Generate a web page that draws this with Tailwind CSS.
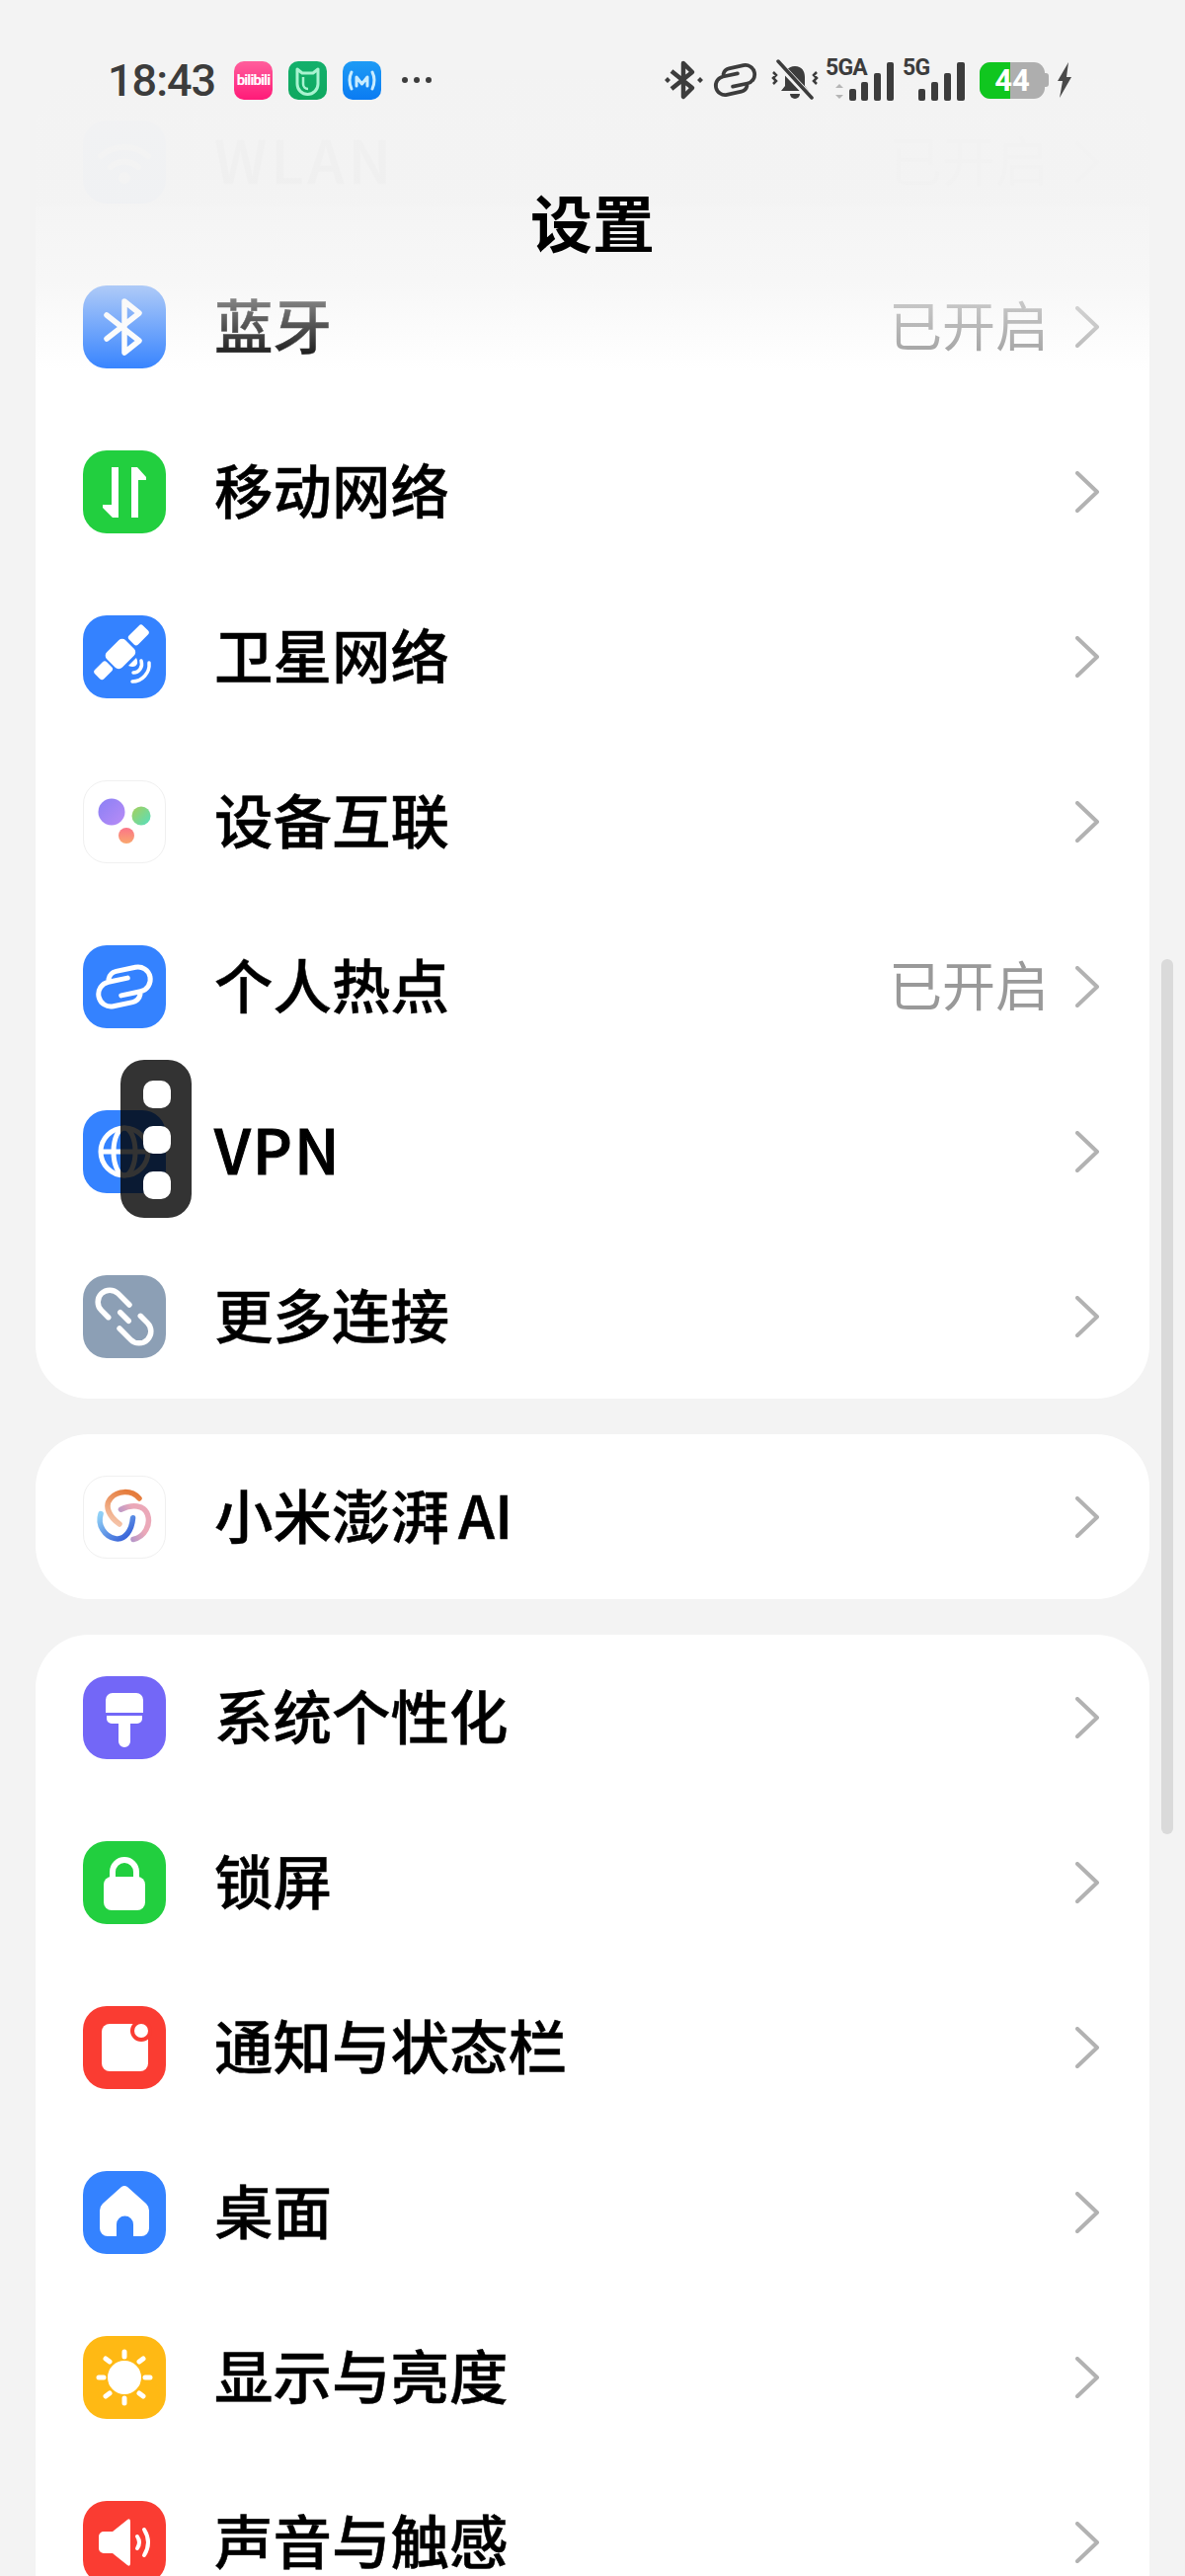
<!DOCTYPE html>
<html lang="zh-CN">
<head>
  <meta charset="UTF-8" />
  <title>设置</title>
  <script src="https://cdn.jsdelivr.net/npm/@tailwindcss/browser@4"></script>
</head>
<body class="bg-[#f3f3f3] font-['Noto_Sans_CJK_SC',sans-serif]">
  <svg class="hidden">
    <symbol id="chevron" viewBox="0 0 24 42"><path d="M2 2l20 19L2 40" fill="none" stroke="#b2b2b2" stroke-width="4" stroke-linecap="round" stroke-linejoin="round"/></symbol>
    <symbol id="chain" viewBox="0 0 84 84"><g transform="rotate(-12 42 42)" fill="none" stroke="currentColor" stroke-width="5" stroke-linecap="round"><path d="M47 34H27a12.500 12.500 0 0 0 0 25h20a10 10 0 0 0 9-6"/><path d="M37 50h20a12.500 12.500 0 0 0 0-25H37a10 10 0 0 0-9 6"/></g></symbol>
  </svg>

  <div class="relative w-[1200px] h-[2608px] overflow-hidden">
    <!-- Settings list -->
    <main class="pt-[80px] px-[36px] flex flex-col gap-[36px]">
      <section class="bg-white rounded-[54px]">
        <!-- WLAN -->
        <div class="h-[167px] flex items-center pl-[48px] pr-[51px]">
          <div class="w-[84px] h-[84px] rounded-[24px] bg-[#3482ff] flex items-center justify-center">
            <svg class="w-[84px] h-[84px]" viewBox="0 0 84 84" fill="none" stroke="#fff" stroke-width="6" stroke-linecap="round"><path d="M18 36c14-12 34-12 48 0M28 47c8-7 20-7 28 0"/><circle cx="42" cy="58" r="3" fill="#fff"/></svg>
          </div>
          <span class="ml-[49px] mb-[6px] text-[59.5px] font-medium tracking-[4px] text-black [-webkit-text-stroke:0.5px_black]">WLAN</span>
          <span class="ml-auto mb-[6px] text-[54px] text-[#999]">已开启</span>
          <svg class="ml-[27px] w-[24px] h-[42px]"><use href="#chevron"/></svg>
        </div>
        <!-- 蓝牙 -->
        <div class="h-[167px] flex items-center pl-[48px] pr-[51px]">
          <div class="w-[84px] h-[84px] rounded-[24px] bg-[#3482ff]">
            <svg class="w-[84px] h-[84px]" viewBox="0 0 84 84" fill="none" stroke="#fff" stroke-width="5.500" stroke-linecap="round" stroke-linejoin="round"><path d="M24 30l33 26-15 12V16l15 12-33 26"/></svg>
          </div>
          <span class="ml-[49px] mb-[6px] text-[59.5px] font-medium text-black [-webkit-text-stroke:0.5px_black]">蓝牙</span>
          <span class="ml-auto mb-[6px] text-[54px] text-[#999]">已开启</span>
          <svg class="ml-[27px] w-[24px] h-[42px]"><use href="#chevron"/></svg>
        </div>
        <!-- 移动网络 -->
        <div class="h-[167px] flex items-center pl-[48px] pr-[51px]">
          <div class="w-[84px] h-[84px] rounded-[24px] bg-[#22cf3f]">
            <svg class="w-[84px] h-[84px]" viewBox="0 0 84 84" fill="#fff"><path d="M29 17h7v51h-6L20 58v-3h9zM49 17h6l9 10v3h-8v38h-7z"/></svg>
          </div>
          <span class="ml-[49px] mb-[6px] text-[59.5px] font-medium text-black [-webkit-text-stroke:0.5px_black]">移动网络</span>
          <svg class="ml-auto w-[24px] h-[42px]"><use href="#chevron"/></svg>
        </div>
        <!-- 卫星网络 -->
        <div class="h-[167px] flex items-center pl-[48px] pr-[51px]">
          <div class="w-[84px] h-[84px] rounded-[24px] bg-[#3482ff]">
            <svg class="w-[84px] h-[84px]" viewBox="0 0 84 84" fill="#fff">
              <g transform="rotate(-45 39 38)"><rect x="5" y="31" width="17" height="13" rx="3"/><rect x="24" y="27" width="27" height="22" rx="5"/><rect x="54" y="31" width="20" height="13" rx="3"/></g>
              <path d="M46 51l8-8c3 6 0 11-8 8z"/>
              <path d="M59 46c2 6-2 12-8 12M67 48c1 10-7 19-17 19" fill="none" stroke="#fff" stroke-width="3.500" stroke-linecap="round"/>
            </svg>
          </div>
          <span class="ml-[49px] mb-[6px] text-[59.5px] font-medium text-black [-webkit-text-stroke:0.5px_black]">卫星网络</span>
          <svg class="ml-auto w-[24px] h-[42px]"><use href="#chevron"/></svg>
        </div>
        <!-- 设备互联 -->
        <div class="h-[167px] flex items-center pl-[48px] pr-[51px]">
          <div class="w-[84px] h-[84px] rounded-[24px] bg-white border border-[#f0f0f0]">
            <svg class="w-[82px] h-[82px]" viewBox="1 1 82 82">
              <defs>
                <linearGradient id="dot1" x1="0" y1="0" x2="1" y2="1"><stop offset="0" stop-color="#8a80f5"/><stop offset="1" stop-color="#b98cf6"/></linearGradient>
                <linearGradient id="dot2" x1="0" y1="0" x2="1" y2="1"><stop offset="0" stop-color="#a8cf5a"/><stop offset="1" stop-color="#55dfc0"/></linearGradient>
                <linearGradient id="dot3" x1="0" y1="0" x2="0" y2="1"><stop offset="0" stop-color="#fb7488"/><stop offset="1" stop-color="#f9a76e"/></linearGradient>
              </defs>
              <circle cx="29" cy="32" r="13.500" fill="url(#dot1)"/><circle cx="59" cy="36" r="9.500" fill="url(#dot2)"/><circle cx="44" cy="56" r="8" fill="url(#dot3)"/>
            </svg>
          </div>
          <span class="ml-[49px] mb-[6px] text-[59.5px] font-medium text-black [-webkit-text-stroke:0.5px_black]">设备互联</span>
          <svg class="ml-auto w-[24px] h-[42px]"><use href="#chevron"/></svg>
        </div>
        <!-- 个人热点 -->
        <div class="h-[167px] flex items-center pl-[48px] pr-[51px]">
          <div class="w-[84px] h-[84px] rounded-[24px] bg-[#3482ff] text-white">
            <svg class="w-[84px] h-[84px]"><use href="#chain"/></svg>
          </div>
          <span class="ml-[49px] mb-[6px] text-[59.5px] font-medium text-black [-webkit-text-stroke:0.5px_black]">个人热点</span>
          <span class="ml-auto mb-[6px] text-[54px] text-[#999]">已开启</span>
          <svg class="ml-[27px] w-[24px] h-[42px]"><use href="#chevron"/></svg>
        </div>
        <!-- VPN -->
        <div class="h-[167px] flex items-center pl-[48px] pr-[51px]">
          <div class="w-[84px] h-[84px] rounded-[24px] bg-[#3482ff]">
            <svg class="w-[84px] h-[84px]" viewBox="0 0 84 84" fill="none" stroke="#fff" stroke-width="5"><circle cx="42" cy="42" r="24"/><ellipse cx="42" cy="42" rx="11" ry="24"/><path d="M18 42h48"/></svg>
          </div>
          <span class="ml-[49px] mb-[6px] text-[62px] font-medium tracking-[2px] text-black [-webkit-text-stroke:1px_black]">VPN</span>
          <svg class="ml-auto w-[24px] h-[42px]"><use href="#chevron"/></svg>
        </div>
        <!-- 更多连接 -->
        <div class="h-[167px] flex items-center pl-[48px] pr-[51px]">
          <div class="w-[84px] h-[84px] rounded-[24px] bg-[#8c9fb5]">
            <svg class="w-[84px] h-[84px]" viewBox="0 0 84 84" fill="none" stroke="#fff" stroke-width="5.500" stroke-linecap="round"><g transform="rotate(45 42 42)"><path d="M37 30H21a12 12 0 0 0 0 24h10"/><path d="M47 54h16a12 12 0 0 0 0-24H53"/><path d="M36 42h12"/></g></svg>
          </div>
          <span class="ml-[49px] mb-[6px] text-[59.5px] font-medium text-black [-webkit-text-stroke:0.5px_black]">更多连接</span>
          <svg class="ml-auto w-[24px] h-[42px]"><use href="#chevron"/></svg>
        </div>
      </section>

      <section class="bg-white rounded-[54px]">
        <!-- 小米澎湃AI -->
        <div class="h-[167px] flex items-center pl-[48px] pr-[51px]">
          <div class="w-[84px] h-[84px] rounded-[24px] bg-white border border-[#f0f0f0]">
            <svg class="w-[82px] h-[82px]" viewBox="1 1 82 82" fill="none" stroke-width="5.500" stroke-linecap="round">
              <defs>
                <linearGradient id="arm1" gradientUnits="userSpaceOnUse" x1="36" y1="50" x2="50" y2="18"><stop offset="0" stop-color="#f5c3a8"/><stop offset="1" stop-color="#e57c3c"/></linearGradient>
                <linearGradient id="arm2" gradientUnits="userSpaceOnUse" x1="36" y1="30" x2="66" y2="50"><stop offset="0" stop-color="#eba8b8"/><stop offset="1" stop-color="#6f7fe0"/></linearGradient>
                <linearGradient id="arm3" gradientUnits="userSpaceOnUse" x1="60" y1="44" x2="22" y2="50"><stop offset="0" stop-color="#8fd0f6"/><stop offset="1" stop-color="#3159d6"/></linearGradient>
              </defs>
              <path d="M37 49C27 42 21 31 28 23C35 15 49 14 57 23" stroke="url(#arm1)"/>
              <path d="M37 49C27 42 21 31 28 23C35 15 49 14 57 23" transform="rotate(120 42 42)" stroke="url(#arm2)"/>
              <path d="M37 49C27 42 21 31 28 23C35 15 49 14 57 23" transform="rotate(240 42 42)" stroke="url(#arm3)"/>
            </svg>
          </div>
          <span class="ml-[49px] mb-[6px] text-[59.5px] font-medium text-black [-webkit-text-stroke:0.5px_black]">小米澎湃<span class="ml-[9px]">AI</span></span>
          <svg class="ml-auto w-[24px] h-[42px]"><use href="#chevron"/></svg>
        </div>
      </section>

      <section class="bg-white rounded-[54px]">
        <!-- 系统个性化 -->
        <div class="h-[167px] flex items-center pl-[48px] pr-[51px]">
          <div class="w-[84px] h-[84px] rounded-[24px] bg-[#7367f7]">
            <svg class="w-[84px] h-[84px]" viewBox="0 0 84 84" fill="#fff"><path d="M30 17h24a7 7 0 0 1 7 7v13H23V24a7 7 0 0 1 7-7z"/><path d="M24 40h36v3a5 5 0 0 1-5 5h-7v18a6 6 0 0 1-12 0V48h-7a5 5 0 0 1-5-5z"/></svg>
          </div>
          <span class="ml-[49px] mb-[6px] text-[59.5px] font-medium text-black [-webkit-text-stroke:0.5px_black]">系统个性化</span>
          <svg class="ml-auto w-[24px] h-[42px]"><use href="#chevron"/></svg>
        </div>
        <!-- 锁屏 -->
        <div class="h-[167px] flex items-center pl-[48px] pr-[51px]">
          <div class="w-[84px] h-[84px] rounded-[24px] bg-[#22cf3f]">
            <svg class="w-[84px] h-[84px]" viewBox="0 0 84 84"><path d="M30 38v-7a12 12 0 0 1 24 0v7" fill="none" stroke="#fff" stroke-width="6"/><rect x="21" y="36" width="42" height="34" rx="8" fill="#fff"/></svg>
          </div>
          <span class="ml-[49px] mb-[6px] text-[59.5px] font-medium text-black [-webkit-text-stroke:0.5px_black]">锁屏</span>
          <svg class="ml-auto w-[24px] h-[42px]"><use href="#chevron"/></svg>
        </div>
        <!-- 通知与状态栏 -->
        <div class="h-[167px] flex items-center pl-[48px] pr-[51px]">
          <div class="w-[84px] h-[84px] rounded-[24px] bg-[#fa3c32]">
            <svg class="w-[84px] h-[84px]" viewBox="0 0 84 84" fill="#fff"><rect x="19" y="18" width="47" height="48" rx="8"/><circle cx="59" cy="25" r="11" fill="#fa3c32"/><circle cx="59" cy="25" r="7"/></svg>
          </div>
          <span class="ml-[49px] mb-[6px] text-[59.5px] font-medium text-black [-webkit-text-stroke:0.5px_black]">通知与状态栏</span>
          <svg class="ml-auto w-[24px] h-[42px]"><use href="#chevron"/></svg>
        </div>
        <!-- 桌面 -->
        <div class="h-[167px] flex items-center pl-[48px] pr-[51px]">
          <div class="w-[84px] h-[84px] rounded-[24px] bg-[#3482ff]">
            <svg class="w-[84px] h-[84px]" viewBox="0 0 84 84" fill="#fff"><path d="M39 16q3-2 6 0l19 17q3 3 3 7v18a8 8 0 0 1-8 8h-8V54a8.500 8.500 0 0 0-17 0v12h-9a8 8 0 0 1-8-8V40q0-4 3-7z"/></svg>
          </div>
          <span class="ml-[49px] mb-[6px] text-[59.5px] font-medium text-black [-webkit-text-stroke:0.5px_black]">桌面</span>
          <svg class="ml-auto w-[24px] h-[42px]"><use href="#chevron"/></svg>
        </div>
        <!-- 显示与亮度 -->
        <div class="h-[167px] flex items-center pl-[48px] pr-[51px]">
          <div class="w-[84px] h-[84px] rounded-[24px] bg-[#ffb914]">
            <svg class="w-[84px] h-[84px]" viewBox="0 0 84 84" fill="#fff" stroke="#fff" stroke-width="5" stroke-linecap="round"><circle cx="42" cy="42" r="14.500"/><path d="M42 16v5M42 63v5M16 42h5M63 42h5M23 23l4 3M61 23l-4 3M23 61l4-3M61 61l-4-3"/></svg>
          </div>
          <span class="ml-[49px] mb-[6px] text-[59.5px] font-medium text-black [-webkit-text-stroke:0.5px_black]">显示与亮度</span>
          <svg class="ml-auto w-[24px] h-[42px]"><use href="#chevron"/></svg>
        </div>
        <!-- 声音与触感 -->
        <div class="h-[167px] flex items-center pl-[48px] pr-[51px]">
          <div class="w-[84px] h-[84px] rounded-[24px] bg-[#fa3c32]">
            <svg class="w-[84px] h-[84px]" viewBox="0 0 84 84" fill="#fff"><path d="M21 31h9l15-12q3-2 3 2v42q0 4-3 2L30 53h-9a5 5 0 0 1-5-5V36a5 5 0 0 1 5-5z"/><path d="M55 36q4 6 0 12M62 29q8 13 0 26" fill="none" stroke="#fff" stroke-width="4" stroke-linecap="round"/></svg>
          </div>
          <span class="ml-[49px] mb-[6px] text-[59.5px] font-medium text-black [-webkit-text-stroke:0.5px_black]">声音与触感</span>
          <svg class="ml-auto w-[24px] h-[42px]"><use href="#chevron"/></svg>
        </div>
      </section>
    </main>

    <!-- Scrollbar -->
    <div class="absolute left-[1176px] top-[971px] w-[12px] h-[886px] rounded-full bg-[#dadada]"></div>

    <!-- Floating pill over the VPN row -->
    <div class="absolute left-[122px] top-[1073px] w-[72px] h-[160px] rounded-[24px] bg-black/80 flex flex-col items-center pl-[1px] pt-[21px] gap-[18px]">
      <div class="w-[28px] h-[28px] rounded-[10px] bg-white"></div>
      <div class="w-[28px] h-[28px] rounded-[10px] bg-white"></div>
      <div class="w-[28px] h-[28px] rounded-[10px] bg-white"></div>
    </div>

    <!-- Header over the list, fades out the row beneath it -->
    <header class="absolute top-0 inset-x-0 h-[376px] bg-[linear-gradient(to_bottom,#f3f3f3_0,rgba(243,243,243,0.985)_205px,rgba(243,243,243,0.88)_212px,rgba(243,243,243,0.65)_288px,rgba(243,243,243,0)_376px)]">
      <div class="pt-[59px] h-[103px] pl-[109px] pr-[114px] flex items-center justify-between">
        <!-- Left: time and notification apps -->
        <div class="flex items-center">
          <span class="font-['Roboto',sans-serif] font-medium text-[45px] leading-none text-[#3c3c3c] w-[107px] tracking-[-1px]">18:43</span>
          <div class="relative ml-[21px] w-[39px] h-[39px] rounded-[10px] bg-[linear-gradient(to_bottom,#ff5f9c,#ff1a78)] flex items-center justify-center overflow-hidden">
            <span class="font-['Roboto',sans-serif] font-bold text-[15px] leading-none tracking-[-0.9px] text-white">bilibili</span>
          </div>
          <div class="ml-[16px] w-[39px] h-[39px] rounded-[10px] bg-[linear-gradient(to_bottom,#13b06c,#0fa85f)]">
            <svg class="w-[39px] h-[39px]" viewBox="0 0 39 39" fill="none" stroke="#a8f3d0" stroke-width="3" stroke-linejoin="round"><path d="M9 8l5 4h11l5-4v15a10.500 10.500 0 0 1-21 0z"/><path d="M15 16v7a5 5 0 0 0 5 5" stroke-width="2.500"/></svg>
          </div>
          <div class="ml-[16px] w-[39px] h-[39px] rounded-[10px] bg-[linear-gradient(to_bottom,#1e9bf5,#0a7bf2)]">
            <svg class="w-[39px] h-[39px]" viewBox="0 0 39 39" fill="none" stroke="#c8ecff" stroke-width="3" stroke-linecap="round" stroke-linejoin="round"><path d="M9 11q-4 8 0 17M30 11q4 8 0 17"/><path d="M14 25v-9l5.500 7 5.500-7v9"/></svg>
          </div>
          <svg class="ml-[20px] w-[32px] h-[8px]" viewBox="0 0 32 8" fill="#3c3c3c"><circle cx="4" cy="4" r="3"/><circle cx="16" cy="4" r="3"/><circle cx="28" cy="4" r="3"/></svg>
        </div>
        <!-- Right: system status icons -->
        <div class="flex items-center text-[#3c3c3c]">
          <svg class="w-[39px] h-[42px]" viewBox="0 0 39 42" fill="none" stroke="currentColor" stroke-width="4.500" stroke-linejoin="round"><path d="M7 12l21 17-9 9V4l9 9-21 17"/><path d="M0 21l3-3 3 3-3 3zM33 21l3-3 3 3-3 3z" fill="currentColor" stroke="none"/></svg>
          <svg class="ml-[10px] w-[45px] h-[42px]" viewBox="12 14 60 56"><use href="#chain" width="84" height="84"/></svg>
          <svg class="ml-[13px] w-[50px] h-[42px]" viewBox="0 0 50 42" fill="currentColor"><path d="M25 7c7 0 10 5 10 11v9l4 5H11l4-5v-9c0-6 3-11 10-11z"/><path d="M20 35h10a5 5 0 0 1-10 0z"/><path d="M7 3l35 37" stroke="#f3f3f3" stroke-width="7"/><path d="M8 2l34 37" stroke="currentColor" stroke-width="3.500" stroke-linecap="round"/><path d="M3 13l3 3-3 3 3 3-3 3M47 13l-3 3 3 3-3 3 3 3" fill="none" stroke="currentColor" stroke-width="2.500"/></svg>
          <!-- 5GA signal -->
          <div class="relative ml-[6px] w-[70px] h-[42px]">
            <span class="absolute left-0 top-[-3px] font-['Roboto',sans-serif] font-bold text-[23px] leading-[23px] tracking-[-0.8px]">5GA</span>
            <svg class="absolute left-0 top-0 w-[70px] h-[42px]" viewBox="0 0 70 42"><path d="M14 25l4 4h-8zM14 40l4-4h-8z" fill="#b5b5b5"/><rect x="24" y="30" width="7" height="12" rx="2" fill="currentColor"/><rect x="36" y="23" width="7" height="19" rx="2" fill="currentColor"/><rect x="49" y="14" width="7" height="28" rx="2" fill="currentColor"/><rect x="62" y="3" width="7" height="39" rx="2" fill="currentColor"/></svg>
          </div>
          <!-- 5G signal -->
          <div class="relative ml-[8px] w-[63px] h-[42px]">
            <span class="absolute left-0 top-[-3px] font-['Roboto',sans-serif] font-bold text-[23px] leading-[23px] tracking-[-0.8px]">5G</span>
            <svg class="absolute left-0 top-0 w-[63px] h-[42px]" viewBox="0 0 63 42"><rect x="16" y="30" width="7" height="12" rx="2" fill="currentColor"/><rect x="29" y="23" width="7" height="19" rx="2" fill="currentColor"/><rect x="42" y="14" width="7" height="28" rx="2" fill="currentColor"/><rect x="55" y="3" width="8" height="39" rx="2" fill="currentColor"/></svg>
          </div>
          <!-- Battery -->
          <div class="relative ml-[15px] w-[66px] h-[37px] rounded-[11px] bg-[#aeaeae] overflow-hidden flex items-center justify-center">
            <div class="absolute left-0 inset-y-0 w-[31px] bg-[#10c61f]"></div>
            <span class="relative font-['Roboto',sans-serif] font-bold text-[31px] leading-none text-white">44</span>
          </div>
          <div class="w-[4px] h-[14px] rounded-r-[3px] bg-[#aeaeae]"></div>
          <svg class="ml-[8px] w-[16px] h-[36px]" viewBox="0 0 16 36" fill="#4a4a4a"><path d="M12 0L1 19h5L3 36l12-21h-5z"/></svg>
        </div>
      </div>
      <h1 class="mt-[80px] h-[80px] flex items-center justify-center text-[63px] font-bold text-black">设置</h1>
    </header>
  </div>
</body>
</html>
